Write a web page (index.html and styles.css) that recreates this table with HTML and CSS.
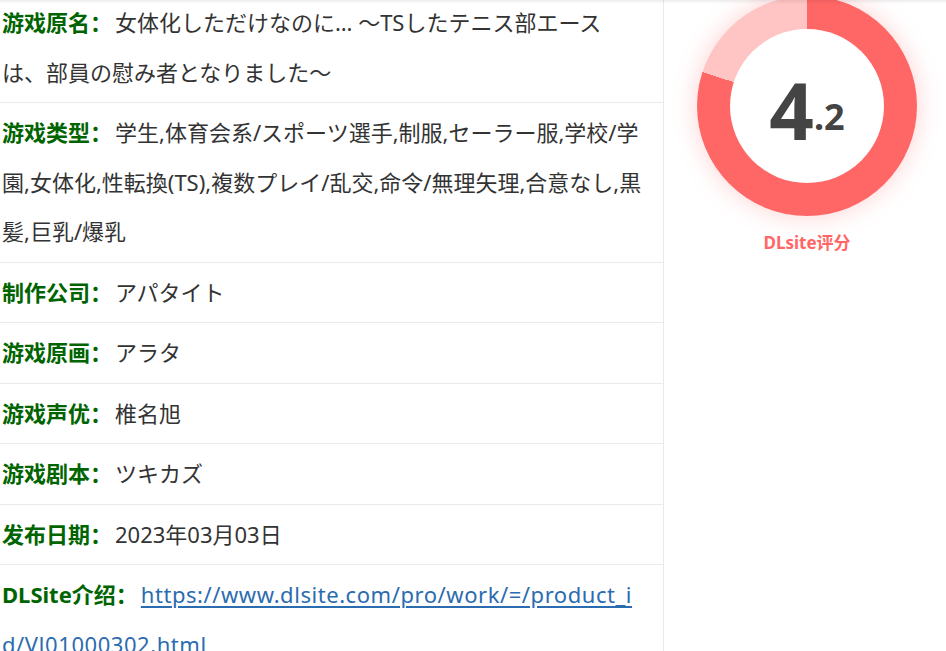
FILE: index.html
```html
<!DOCTYPE html>
<html lang="zh-CN">
<head>
    <meta charset="UTF-8">
    <meta name="viewport" content="width=device-width, initial-scale=1.0">
    <title>游戏信息</title>
    <link rel="stylesheet" href="styles.css">
</head>
<body>
    <div class="top-shade"></div>

    <div class="game-info">
        <section class="info-list">
            <div class="info-row">
                <span class="label">游戏原名：</span>女体化しただけなのに… ～TSしたテニス部エース<br>は、部員の慰み者となりました～
            </div>
            <div class="info-row">
                <span class="label">游戏类型：</span>学生,体育会系/スポーツ選手,制服,セーラー服,学校/学園,女体化,性転換(TS),複数プレイ/乱交,命令/無理矢理,合意なし,黒髪,巨乳/爆乳
            </div>
            <div class="info-row">
                <span class="label">制作公司：</span>アパタイト
            </div>
            <div class="info-row">
                <span class="label">游戏原画：</span>アラタ
            </div>
            <div class="info-row">
                <span class="label">游戏声优：</span>椎名旭
            </div>
            <div class="info-row">
                <span class="label">游戏剧本：</span>ツキカズ
            </div>
            <div class="info-row">
                <span class="label">发布日期：</span>2023年03月03日
            </div>
            <div class="info-row info-row-link">
                <span class="label">DLSite介绍：</span><a class="link" href="#">https://www.dlsite.com/pro/work/=/product_id/VJ01000302.html</a>
            </div>
        </section>

        <aside class="rating">
            <div class="ring">
                <div class="ring-inner">
                    <span class="score-int">4</span><span class="score-dec">.2</span>
                </div>
            </div>
            <div class="rating-title">DLsite评分</div>
        </aside>
    </div>
</body>
</html>
```

FILE: styles.css
```css
* {
    margin: 0;
    padding: 0;
    box-sizing: border-box;
}

body {
    font-family: "Noto Sans", "Noto Sans CJK SC", sans-serif;
    background-color: #fff;
    color: #333;
    overflow: hidden;
}

/* sombra do cabeçalho fixo */
.top-shade {
    position: fixed;
    top: 0;
    left: 0;
    right: 0;
    height: 4px;
    background: linear-gradient(rgba(0, 0, 0, 0.07), rgba(0, 0, 0, 0));
    z-index: 10;
}

.game-info {
    display: flex;
    margin-top: -7px;
}

/* Lista de informações */
.info-list {
    width: 664px;
    border-right: 1px solid #e6ebf0;
}

.info-row {
    font-size: 22px;
    line-height: 49.5px;
    padding: 5px 3px 5px 2px;
    border-bottom: 1px solid #e6ebf0;
    word-break: break-all;
}

.info-row-link {
    padding-right: 20px;
}

.label {
    color: #006400;
    font-weight: bold;
    margin-right: 3px;
}

.link {
    color: #2b6cb0;
    text-decoration: underline;
    text-underline-offset: 3px;
    letter-spacing: 0.55px;
}

/* Avaliação */
.rating {
    flex: 1;
    display: flex;
    flex-direction: column;
    align-items: center;
    padding-top: 3px;
    padding-left: 4px;
}

.ring {
    width: 220px;
    height: 220px;
    border-radius: 50%;
    background: conic-gradient(#ff6666 0deg 288deg, #ffc4c4 288deg 360deg);
    box-shadow: 0 0 24px rgba(255, 102, 102, 0.3);
    display: flex;
    justify-content: center;
    align-items: center;
}

.ring-inner {
    width: 154px;
    height: 154px;
    border-radius: 50%;
    background-color: #fff;
    display: flex;
    justify-content: center;
    align-items: center;
    padding-top: 8px;
    color: #444;
    font-weight: bold;
}

.score-int {
    font-size: 78px;
    line-height: 1;
}

.score-dec {
    font-size: 36px;
    line-height: 1;
    margin-top: 14px;
}

.rating-title {
    margin-top: 13px;
    color: #ff6666;
    font-size: 17px;
    font-weight: bold;
}
```
